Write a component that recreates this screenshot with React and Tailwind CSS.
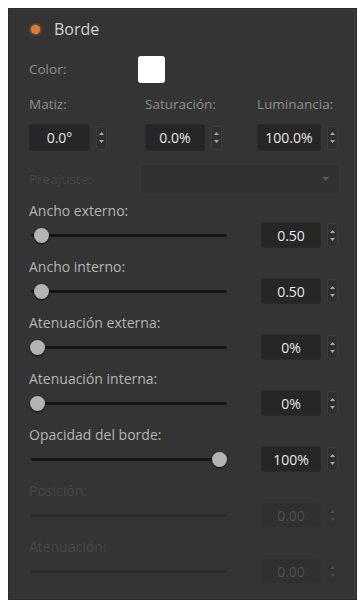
import React from "react";

const font = { fontFamily: '"Open Sans", "Noto Sans", sans-serif' };

const Stepper = ({ dim = false }) => (
  <div
    className={`flex h-[24px] w-[11px] flex-col items-center justify-center gap-[5px] rounded-[3px] border ${
      dim ? "border-[#343434] bg-[#323232]" : "border-[#3c3c3c] bg-[#2f2f2f]"
    }`}
  >
    <svg width="5" height="3" viewBox="0 0 5 3">
      <path d="M2.5 0 L5 3 L0 3 Z" fill={dim ? "#4a4a4a" : "#a8a8a8"} />
    </svg>
    <svg width="5" height="3" viewBox="0 0 5 3">
      <path d="M0 0 L5 0 L2.5 3 Z" fill={dim ? "#4a4a4a" : "#a8a8a8"} />
    </svg>
  </div>
);

const NumBox = ({ value, dim = false }) => (
  <div
    className={`flex h-[26px] w-[60px] items-center justify-center rounded-[3px] border text-[14px] ${
      dim
        ? "border-[#333] bg-[#303030] text-[#4e4e4e]"
        : "border-[#2a2a2a] bg-[#262626] text-[#e6e6e6]"
    }`}
  >
    {value}
  </div>
);

const Slider = ({ pos, dim = false }) => (
  <div className="relative h-[26px] w-[198px] shrink-0">
    <div
      className={`absolute left-[2px] right-0 top-[12px] h-[3px] rounded-full ${
        dim ? "bg-[#2b2b2b]" : "bg-[#141414]"
      }`}
    />
    {!dim && (
      <div
        className="absolute top-[6px] h-[15px] w-[15px] rounded-full bg-[#b4b4b4] shadow-[0_1px_2px_rgba(0,0,0,0.6)]"
        style={{ left: pos - 7.5 }}
      />
    )}
  </div>
);

const SliderGroup = ({ label, value, pos, dim = false }) => (
  <div className="flex h-[46px] flex-col">
    <div
      className={`h-[18px] text-[14px] leading-[18px] ${
        dim ? "text-[#474747]" : "text-[#b4b4b4]"
      }`}
    >
      {label}
    </div>
    <div className="mt-[2px] flex items-center">
      <Slider pos={pos} dim={dim} />
      <div className="ml-[34px]">
        <NumBox value={value} dim={dim} />
      </div>
      <div className="ml-[6px]">
        <Stepper dim={dim} />
      </div>
    </div>
  </div>
);

const TopField = ({ label, value, w, colW }) => (
  <div className="flex shrink-0 flex-col" style={{ width: colW }}>
    <div className="h-[18px] text-[13.5px] leading-[18px] text-[#8e8e8e]">{label}</div>
    <div className="mt-[11px] flex items-center">
      <div
        className="flex h-[27px] items-center justify-center rounded-[3px] border border-[#2a2a2a] bg-[#262626] text-[14px] text-[#e6e6e6]"
        style={{ width: w }}
      >
        {value}
      </div>
      <div className="ml-[6px]">
        <Stepper />
      </div>
    </div>
  </div>
);

export default function App() {
  return (
    <div className="min-h-[603px] bg-white pt-[8px] pl-[8px]" style={font}>
      <div className="flex h-[592px] w-[349px] flex-col border border-[#2b2b2b] bg-[#343434] pl-[20px] shadow-[inset_-2px_0_0_#3c3c3c]">
        {/* header */}
        <div className="mt-[10px] flex h-[20px] items-center">
          <span className="ml-[2px] h-[9px] w-[9px] rounded-full bg-[#e07a2e] shadow-[0_0_3px_#ff8a3a]" />
          <span className="ml-[14px] text-[16px] text-[#d2d2d2]">Borde</span>
        </div>

        {/* color */}
        <div className="mt-[17px] flex h-[27px] items-center">
          <span className="w-[109px] text-[13.5px] text-[#8e8e8e]">Color:</span>
          <span className="h-[27px] w-[27px] rounded-[3px] bg-white" />
        </div>

        {/* hue / sat / lum */}
        <div className="mt-[12px] flex">
          <TopField label="Matiz:" value="0.0°" w={61} colW={116} />
          <TopField label="Saturación:" value="0.0%" w={60} colW={112} />
          <TopField label="Luminancia:" value="100.0%" w={64} colW={90} />
        </div>

        {/* preset */}
        <div className="mt-[13px] flex h-[30px] items-center">
          <span className="w-[111px] text-[13.5px] text-[#454545]">Preajuste:</span>
          <div className="flex h-[30px] w-[200px] items-center justify-end rounded-[3px] border border-[#383838] bg-[#313131] pr-[10px]">
            <svg width="7" height="4" viewBox="0 0 7 4">
              <path d="M0 0 L7 0 L3.5 4 Z" fill="#555" />
            </svg>
          </div>
        </div>

        {/* sliders */}
        <div className="mt-[8px] flex flex-col gap-[10px]">
          <SliderGroup label="Ancho externo:" value="0.50" pos={12} />
          <SliderGroup label="Ancho interno:" value="0.50" pos={12} />
          <SliderGroup label="Atenuación externa:" value="0%" pos={8} />
          <SliderGroup label="Atenuación interna:" value="0%" pos={8} />
          <SliderGroup label="Opacidad del borde:" value="100%" pos={190} />
          <SliderGroup label="Posición:" value="0.00" pos={0} dim />
          <SliderGroup label="Atenuación:" value="0.00" pos={0} dim />
        </div>
      </div>
    </div>
  );
}
